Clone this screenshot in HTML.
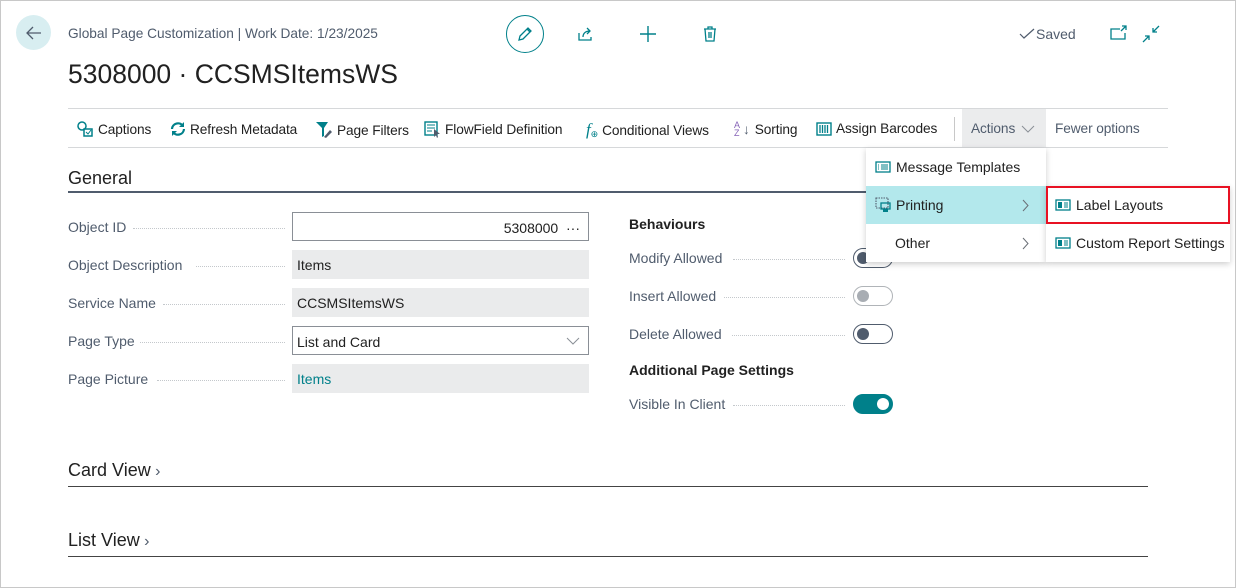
<!DOCTYPE html>
<html><head><meta charset="utf-8">
<style>
*{box-sizing:border-box;margin:0;padding:0}
body{width:1236px;height:588px;background:#fff;font-family:"Liberation Sans",sans-serif;color:#212121;position:relative;overflow:hidden}
.frame{position:absolute;left:0;top:0;width:1236px;height:588px;border:1px solid #c8c8c8}
.a{position:absolute;white-space:nowrap}
.tb{font-size:13.7px;letter-spacing:-0.1px;color:#212121;top:121px;display:flex;align-items:center;gap:4px}
.lbl{font-size:14px;color:#505c6d}
.dots{position:absolute;height:1px;border-top:1px dotted #c4c8cc}
.fld{position:absolute;left:292px;width:297px;height:29px;font-size:14px;padding:7px 5px;color:#212121}
.ro{background:#eaebec}
.ed{border:1px solid #8a8f96;background:#fff}
.tog{position:absolute;left:853px;width:40px;height:20px;border-radius:10px;border:1px solid #505c6d}
.tog i{position:absolute;left:3px;top:3px;width:12px;height:12px;border-radius:50%;background:#505c6d}
.menu{position:absolute;background:#fff;box-shadow:0 2px 6px rgba(0,0,0,.2);}
.mi{position:absolute;left:0;height:38px;font-size:14px;display:flex;align-items:center;padding-left:9px;gap:5px}
</style></head><body>
<div class="frame"></div>
<div class="a" style="left:16px;top:15px;width:35px;height:35px;border-radius:50%;background:#d8eef1"></div>
<svg class="a" style="left:24px;top:23px" width="20" height="20" viewBox="0 0 20 20"><path d="M17 10H3M9 4L3 10L9 16" fill="none" stroke="#505c6d" stroke-width="1.3"/></svg>
<div class="a" style="left:68px;top:26px;font-size:13.7px;color:#505c6d">Global Page Customization | Work Date: 1/23/2025</div>
<div class="a" style="left:68px;top:59px;font-size:26.5px;color:#212121">5308000 · CCSMSItemsWS</div>
<div class="a" style="left:506px;top:15px;width:38px;height:38px;border-radius:50%;border:1px solid #00808a"></div>
<svg class="a" style="left:516px;top:25px" width="18" height="18" viewBox="0 0 18 18"><path d="M3 15l1-4L12 3l3 3-8 8z M11 4l3 3" fill="none" stroke="#00808a" stroke-width="1.3"/></svg>
<svg class="a" style="left:577px;top:25px" width="18" height="18" viewBox="0 0 18 18"><path d="M2 8v7h12v-3 M6 12c0-4 3-6 7-6 M10 3l3 3-3 3" fill="none" stroke="#00808a" stroke-width="1.3"/></svg>
<svg class="a" style="left:639px;top:25px" width="18" height="18" viewBox="0 0 18 18"><path d="M9 1v16M1 9h16" fill="none" stroke="#00808a" stroke-width="1.4"/></svg>
<svg class="a" style="left:701px;top:25px" width="18" height="18" viewBox="0 0 18 18"><path d="M3 4h12M7 4V2h4v2M4 4l1 12h8l1-12M8 7v6M10 7v6" fill="none" stroke="#00808a" stroke-width="1.3"/></svg>
<svg class="a" style="left:1019px;top:28px" width="16" height="12" viewBox="0 0 16 12"><path d="M1 6l4 4L15 1" fill="none" stroke="#505c6d" stroke-width="1.2"/></svg>
<div class="a" style="left:1036px;top:26px;font-size:14px;color:#505c6d">Saved</div>
<svg class="a" style="left:1110px;top:25px" width="18" height="16" viewBox="0 0 18 16"><path d="M10 4H1v10h14V8 M12 1h4v4 M16 1l-5 5" fill="none" stroke="#00808a" stroke-width="1.3"/></svg>
<svg class="a" style="left:1142px;top:25px" width="18" height="18" viewBox="0 0 18 18"><path d="M17 1l-6 6M11 3v4h4 M1 17l6-6M3 11h4v4" fill="none" stroke="#00808a" stroke-width="1.3"/></svg>
<div class="a" style="left:68px;top:108px;width:1100px;height:1px;background:#d6d8da"></div>
<div class="a" style="left:68px;top:147px;width:1100px;height:1px;background:#d6d8da"></div>
<div class="a tb" style="left:77px"><svg width="17" height="16" viewBox="0 0 17 16"><circle cx="5" cy="5" r="4" fill="none" stroke="#00808a" stroke-width="1.5"/><rect x="7" y="8" width="8" height="7" fill="none" stroke="#00808a" stroke-width="1.5"/><path d="M9 11l2 2 3-4" stroke="#00808a" fill="none"/></svg>Captions</div>
<div class="a tb" style="left:170px"><svg width="16" height="16" viewBox="0 0 16 16"><path d="M2 8a6 6 0 0 1 11-3M14 8a6 6 0 0 1-11 3" fill="none" stroke="#00808a" stroke-width="2.2"/><path d="M14 1v5h-5zM2 15v-5h5z" fill="#00808a"/></svg>Refresh Metadata</div>
<div class="a tb" style="left:315px"><svg width="18" height="18" viewBox="0 0 18 18"><path d="M1 1h12L9 7v8l-2 1V7z" fill="#00808a"/><path d="M9 16l6-7 2 2-6 6z" fill="#505c6d"/></svg>Page Filters</div>
<div class="a tb" style="left:424px"><svg width="17" height="17" viewBox="0 0 17 17"><rect x="1" y="1" width="12" height="13" fill="none" stroke="#00808a" stroke-width="1.4"/><path d="M3 4h8M3 7h8M3 10h5" stroke="#00808a"/><path d="M10 8l6 5-3 0 1 3-1 1-1-3-2 2z" fill="#505c6d"/></svg>FlowField Definition</div>
<div class="a tb" style="left:586px;top:120px"><span style="font-style:italic;font-family:'Liberation Serif',serif;color:#00808a;font-size:17px">f</span><span style="color:#00808a;font-size:9px;margin-left:-4px;margin-top:8px">⊕</span>Conditional Views</div>
<div class="a tb" style="left:734px;gap:1px"><span style="font-size:9px;line-height:8px;color:#8764b8;width:8px">A<br>Z</span><span style="color:#505c6d;margin-right:4px">↓</span>Sorting</div>
<div class="a tb" style="left:816px"><svg width="16" height="14" viewBox="0 0 16 14"><rect x="1" y="1" width="14" height="12" fill="none" stroke="#00808a" stroke-width="1.4"/><path d="M4 3v8M6.5 3v8M9 3v8M11.5 3v8" stroke="#00808a" stroke-width="1.3"/></svg>Assign Barcodes</div>
<div class="a" style="left:954px;top:117px;width:1px;height:24px;background:#c8c8c8"></div>
<div class="a" style="left:962px;top:109px;width:84px;height:38px;background:#ebeced"></div>
<div class="a tb" style="left:971px;color:#505c6d">Actions <svg width="14" height="10" viewBox="0 0 14 10" style="margin-left:2px"><path d="M1 2l6 6 6-6" fill="none" stroke="#8a8f96"/></svg></div>
<div class="a tb" style="left:1055px;color:#505c6d">Fewer options</div>
<div class="a" style="left:68px;top:168px;font-size:18px;color:#212121">General</div>
<div class="a" style="left:68px;top:191px;width:1080px;height:2px;background:#505c6d"></div>
<div class="a lbl" style="left:68px;top:219px">Object ID</div><div class="dots" style="left:133px;width:152px;top:228px"></div>
<div class="fld ed" style="top:212px;text-align:right;padding-right:8px">5308000 &nbsp;···</div>
<div class="a lbl" style="left:68px;top:257px">Object Description</div><div class="dots" style="left:196px;width:89px;top:266px"></div>
<div class="fld ro" style="top:250px">Items</div>
<div class="a lbl" style="left:68px;top:295px">Service Name</div><div class="dots" style="left:163px;width:122px;top:304px"></div>
<div class="fld ro" style="top:288px">CCSMSItemsWS</div>
<div class="a lbl" style="left:68px;top:333px">Page Type</div><div class="dots" style="left:140px;width:145px;top:342px"></div>
<div class="fld ed" style="top:326px;padding-left:4px">List and Card<svg style="position:absolute;right:8px;top:10px" width="14" height="9" viewBox="0 0 14 9"><path d="M1 1l6 6 6-6" fill="none" stroke="#8a8f96"/></svg></div>
<div class="a lbl" style="left:68px;top:371px">Page Picture</div><div class="dots" style="left:157px;width:128px;top:380px"></div>
<div class="fld ro" style="top:364px;color:#00808a">Items</div>
<div class="a" style="left:629px;top:216px;font-size:14px;font-weight:bold;color:#212121">Behaviours</div>
<div class="a lbl" style="left:629px;top:250px">Modify Allowed</div><div class="dots" style="left:733px;width:112px;top:259px"></div>
<div class="tog" style="top:248px"><i></i></div>
<div class="a lbl" style="left:629px;top:288px">Insert Allowed</div><div class="dots" style="left:724px;width:121px;top:297px"></div>
<div class="tog" style="top:286px;border-color:#b0b4b8"><i style="background:#a8adb3"></i></div>
<div class="a lbl" style="left:629px;top:326px">Delete Allowed</div><div class="dots" style="left:732px;width:113px;top:335px"></div>
<div class="tog" style="top:324px"><i></i></div>
<div class="a" style="left:629px;top:362px;font-size:14px;font-weight:bold;color:#212121">Additional Page Settings</div>
<div class="a lbl" style="left:629px;top:396px">Visible In Client</div><div class="dots" style="left:733px;width:112px;top:405px"></div>
<div class="tog" style="top:394px;background:#00808a;border-color:#00808a"><i style="background:#fff;left:23px"></i></div>
<div class="a" style="left:68px;top:460px;font-size:18px">Card View<span style="color:#505c6d;font-size:16px"> ›</span></div>
<div class="a" style="left:68px;top:486px;width:1080px;height:1px;background:#444"></div>
<div class="a" style="left:68px;top:530px;font-size:18px">List View<span style="color:#505c6d;font-size:16px"> ›</span></div>
<div class="a" style="left:68px;top:556px;width:1080px;height:1px;background:#444"></div>
<div class="menu" style="left:866px;top:148px;width:180px;height:114px">
 <div class="mi" style="top:0;width:180px"><svg width="16" height="12" viewBox="0 0 16 12"><rect x="1" y="1" width="14" height="10" fill="none" stroke="#00808a" stroke-width="1.3"/><path d="M3 4h1M6 4h7M3 6h1M6 6h7M3 8h1M6 8h7" stroke="#00808a"/></svg>Message Templates</div>
 <div class="mi" style="top:38px;width:180px;background:#b3e8ec"><svg width="16" height="16" viewBox="0 0 16 16"><rect x="1" y="1" width="12" height="10" fill="none" stroke="#505c6d" stroke-width="1.1" stroke-dasharray="1.5 1"/><rect x="6" y="6" width="9" height="6" fill="none" stroke="#00808a" stroke-width="1.3"/><rect x="8" y="12" width="5" height="3" fill="#00808a"/></svg>Printing<svg style="position:absolute;right:16px;top:13px" width="8" height="13" viewBox="0 0 8 13"><path d="M1 1l5 5.5L1 12" fill="none" stroke="#6a6f76"/></svg></div>
 <div class="mi" style="top:76px;width:180px;padding-left:29px">Other<svg style="position:absolute;right:16px;top:13px" width="8" height="13" viewBox="0 0 8 13"><path d="M1 1l5 5.5L1 12" fill="none" stroke="#6a6f76"/></svg></div>
</div>
<div class="menu" style="left:1046px;top:186px;width:184px;height:76px">
 <div class="mi" style="top:0;width:184px"><svg width="16" height="12" viewBox="0 0 16 12"><rect x="1" y="1" width="14" height="10" fill="none" stroke="#00808a" stroke-width="1.3"/><rect x="3" y="3" width="4" height="6" fill="#00808a"/><path d="M9 4h4M9 6h4M9 8h4" stroke="#00808a"/></svg>Label Layouts</div>
 <div class="mi" style="top:38px;width:184px"><svg width="16" height="12" viewBox="0 0 16 12"><rect x="1" y="1" width="14" height="10" fill="none" stroke="#00808a" stroke-width="1.3"/><rect x="3" y="3" width="4" height="6" fill="#00808a"/><path d="M9 4h4M9 6h4M9 8h4" stroke="#00808a"/></svg>Custom Report Settings</div>
</div>
<div class="a" style="left:1046px;top:186px;width:184px;height:38px;border:2px solid #e81123"></div>
</body></html>
